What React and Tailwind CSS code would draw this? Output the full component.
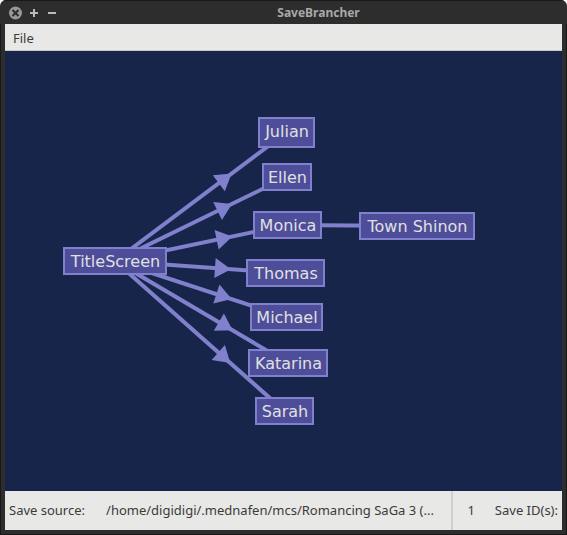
import React from "react";

const nodes = [
  { id: "title", label: "TitleScreen", x: 58, y: 196, w: 104, h: 28 },
  { id: "julian", label: "Julian", x: 253, y: 66, w: 57, h: 31 },
  { id: "ellen", label: "Ellen", x: 257, y: 112, w: 50, h: 28 },
  { id: "monica", label: "Monica", x: 248, y: 160, w: 69, h: 28 },
  { id: "thomas", label: "Thomas", x: 241, y: 208, w: 79, h: 28 },
  { id: "michael", label: "Michael", x: 245, y: 252, w: 73, h: 28 },
  { id: "katarina", label: "Katarina", x: 243, y: 298, w: 80, h: 28 },
  { id: "sarah", label: "Sarah", x: 250, y: 346, w: 59, h: 28 },
  { id: "shinon", label: "Town Shinon", x: 354, y: 161, w: 116, h: 28 },
];

const edges = [
  ["title", "julian"],
  ["title", "ellen"],
  ["title", "monica"],
  ["title", "thomas"],
  ["title", "michael"],
  ["title", "katarina"],
  ["title", "sarah"],
  ["monica", "shinon"],
];

const center = (id) => {
  const n = nodes.find((node) => node.id === id);
  return [n.x + n.w / 2, n.y + n.h / 2];
};

function Edge({ from, to }) {
  const [x1, y1] = center(from);
  const [x2, y2] = center(to);
  const length = Math.hypot(x2 - x1, y2 - y1);
  const ux = (x2 - x1) / length;
  const uy = (y2 - y1) / length;
  const tx = x1 + (x2 - x1) * 0.68;
  const ty = y1 + (y2 - y1) * 0.68;
  const bx = tx - ux * 16;
  const by = ty - uy * 16;
  const points = [
    [tx, ty],
    [bx - uy * 10, by + ux * 10],
    [bx + uy * 10, by - ux * 10],
  ];
  return (
    <g>
      <line x1={x1} y1={y1} x2={x2} y2={y2} stroke="#8080cc" strokeWidth="4" />
      {from === "title" && <polygon points={points.map((p) => p.join(",")).join(" ")} fill="#8080cc" />}
    </g>
  );
}

function TitleBar() {
  return (
    <header className="relative flex h-6 shrink-0 items-center justify-center border-t border-[#181818]">
      <div className="absolute inset-y-0 left-2 flex items-center gap-1">
        <button type="button" aria-label="Close" className="size-4">
          <svg viewBox="0 0 16 16" className="size-4">
            <circle cx="7.5" cy="8" r="6.5" fill="#989898" />
            <path d="M4.5 5l6 6M10.5 5l-6 6" stroke="#2d2d2d" strokeWidth="2" />
          </svg>
        </button>
        <button type="button" aria-label="Maximize" className="size-4">
          <svg viewBox="0 0 16 16" className="size-4">
            <path d="M2 8h8M6 4v8" stroke="#bababa" strokeWidth="2" />
          </svg>
        </button>
        <button type="button" aria-label="Minimize" className="size-4">
          <svg viewBox="0 0 16 16" className="size-4">
            <path d="M0 8h8" stroke="#bababa" strokeWidth="2" />
          </svg>
        </button>
      </div>
      <h1 className="pl-[70px] text-xs font-bold text-[#a8a8a8]">SaveBrancher</h1>
    </header>
  );
}

export default function App() {
  return (
    <div className="h-screen bg-white font-['Noto_Sans',sans-serif] text-[13px] text-[#3b3b3b]">
      <div className="flex h-full flex-col overflow-hidden rounded-t-md bg-[#2d2d2d]">
        <TitleBar />
        <div className="flex min-h-0 flex-1 flex-col border-x border-b border-[#181818] px-1 pb-1">
          <nav className="flex h-[27px] shrink-0 items-center border-b border-[#c9c9c7] bg-[#e8e8e6] pt-1">
            <button type="button" className="px-2">File</button>
          </nav>
          <main className="relative min-h-0 flex-1 overflow-hidden bg-[#18254a]">
            <svg className="absolute inset-0 size-full" aria-hidden="true">
              {edges.map(([from, to]) => (
                <Edge key={to} from={from} to={to} />
              ))}
            </svg>
            {nodes.map((n) => (
              <div
                key={n.id}
                className="absolute flex items-start justify-center border-2 border-[#8080cc] bg-[#4d4d99] pt-px pl-px font-['DejaVu_Sans',sans-serif] text-base leading-6 whitespace-nowrap text-[#e0e0e0]"
                style={{ left: n.x, top: n.y, width: n.w, height: n.h }}
              >
                {n.label}
              </div>
            ))}
          </main>
          <footer className="flex h-[39px] shrink-0 items-center bg-[#e8e8e6] px-1 pt-px">
            <span className="shrink-0">Save source:</span>
            <span className="ml-[21px] min-w-0 flex-1 truncate">/home/digidigi/.mednafen/mcs/Romancing SaGa 3 (...</span>
            <span className="-mt-px flex h-[39px] shrink-0 items-center border-l-2 border-[#cfcfcf] pt-px pl-3.5">1</span>
            <span className="ml-5 shrink-0">Save ID(s):</span>
          </footer>
        </div>
      </div>
    </div>
  );
}
